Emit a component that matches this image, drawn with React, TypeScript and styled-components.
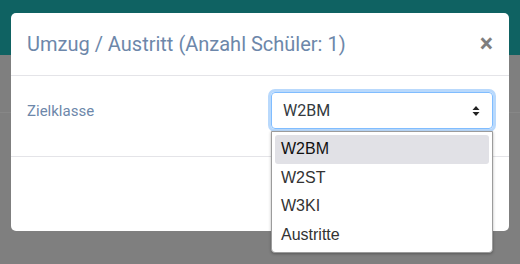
import React from 'react'
import styled, { createGlobalStyle } from 'styled-components'

const GlobalStyle = createGlobalStyle`
  html, body {
    margin: 0;
    padding: 0;
    background: #7f7f7f;
  }
  * {
    box-sizing: border-box;
  }
`

const Page = styled.div`
  position: relative;
  width: 520px;
  height: 264px;
  overflow: hidden;
  background: #7f7f7f;
  font-family: Roboto, 'Liberation Sans', sans-serif;
`

const Navbar = styled.div`
  height: 55px;
  background: #0f6262;
`

const Content = styled.div`
  padding-top: 57px;
  border-bottom: 1px solid #878787;
`

const Modal = styled.div`
  position: absolute;
  left: 11px;
  top: 13px;
  width: 498px;
  height: 218px;
  background: #fff;
  border-radius: 5px;
  display: flex;
  flex-direction: column;
`

const Header = styled.div`
  display: flex;
  align-items: center;
  justify-content: space-between;
  height: 63px;
  padding: 0 16px;
  border-bottom: 1px solid #e4e4e8;
`

const Title = styled.h5`
  margin: 0;
  font-size: 20px;
  font-weight: 400;
  line-height: 30px;
  color: #6d87aa;
`

const Close = styled.span`
  font-size: 25px;
  font-weight: 700;
  line-height: 1;
  color: #000;
  opacity: 0.5;
  margin-right: 0;
  margin-top: -2px;
`

const Body = styled.div`
  height: 81px;
  padding: 16px;
  border-bottom: 1px solid #e4e4e8;
`

const FormRow = styled.div`
  display: flex;
  align-items: center;
`

const Label = styled.label`
  width: 244px;
  font-size: 15px;
  color: #6d87aa;
`

const SelectBox = styled.div`
  flex: 1;
  height: 37px;
  display: flex;
  align-items: center;
  justify-content: space-between;
  padding: 0 12px 0 11px;
  border: 1px solid #80bdff;
  border-radius: 4px;
  box-shadow: 0 0 0 3px #b9d9fc;
  font-size: 16px;
  color: #343a40;
`

const Footer = styled.div`
  flex: 1;
`

const Options = styled.ul`
  position: absolute;
  left: 271px;
  top: 131px;
  width: 222px;
  margin: 0;
  padding: 3px;
  list-style: none;
  background: #fff;
  border: 1px solid #9c9c9c;
  border-radius: 0 0 4px 4px;
  box-shadow: 0 1px 3px rgba(0, 0, 0, 0.3);
  font-family: 'Liberation Sans', Arial, sans-serif;
`

const Option = styled.li<{ $active?: boolean }>`
  height: 28.5px;
  display: flex;
  align-items: center;
  padding-left: 6px;
  border-radius: 3px;
  font-size: 16px;
  color: ${p => (p.$active ? '#111' : '#333')};
  background: ${p => (p.$active ? '#e1e1e6' : 'transparent')};
`

const SortArrows = () => (
  <svg width="8" height="10" viewBox="0 0 8 10">
    <path d="M4 0 L7.5 4 H0.5 Z M4 10 L7.5 6 H0.5 Z" fill="#222" />
  </svg>
)

const classes = ['W2BM', 'W2ST', 'W3KI', 'Austritte']

export default function App() {
  return (
    <Page>
      <GlobalStyle />
      <Navbar />
      <Content />
      <Modal>
        <Header>
          <Title>Umzug / Austritt (Anzahl Schüler: 1)</Title>
          <Close>×</Close>
        </Header>
        <Body>
          <FormRow>
            <Label>Zielklasse</Label>
            <SelectBox>
              <span>W2BM</span>
              <SortArrows />
            </SelectBox>
          </FormRow>
        </Body>
        <Footer />
      </Modal>
      <Options>
        {classes.map((c, i) => (
          <Option key={c} $active={i === 0}>
            {c}
          </Option>
        ))}
      </Options>
    </Page>
  )
}
